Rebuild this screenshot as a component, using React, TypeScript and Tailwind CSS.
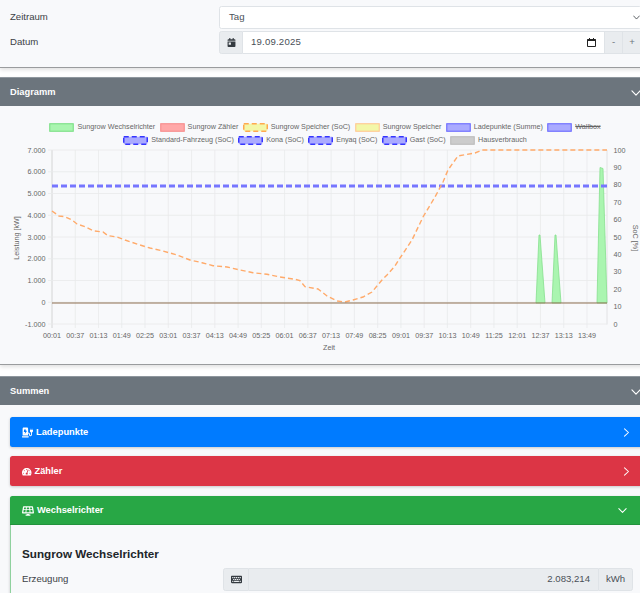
import { FaCalendarDay, FaChargingStation, FaKeyboard, FaSolarPanel, FaTachometerAlt } from "react-icons/fa";

const grid = Array.from({ length: 24 }, (_, i) => 52 + i * 23.26);
const times = Array.from({ length: 24 }, (_, i) => {
  const m = 1 + i * 36;
  return `${String(Math.floor(m / 60)).padStart(2, "0")}:${String(m % 60).padStart(2, "0")}`;
});
const leftTicks = ["7.000", "6.000", "5.000", "4.000", "3.000", "2.000", "1.000", "0", "-1.000"];
const rightTicks = [100, 90, 80, 70, 60, 50, 40, 30, 20, 10, 0];

const soc =
  "52,211 59,216 65,216.7 72,220 77,224 85,226.7 93,230.7 103,232 108,235.7 117,237 125,240 140,245 150,248 163,251 177,255 190,260 202,262.7 213,265.7 227,267 240,270 253,272.7 267,274.3 280,277 295,279.3 300,280.7 305,286.7 318,289 322,292 327,296 337,301 345,302 353,300 363,297 372,292 382,280 387,275 395,266 400,258 412,240 423,217 435,197 443,182 448,170 458,156 475,153 482,150 607,150";

const legendRows = [
  [
    { label: "Sungrow Wechselrichter", fill: "#aaf5b0", stroke: "#7adf84" },
    { label: "Sungrow Zähler", fill: "#ffa8a8", stroke: "#f78a8a" },
    { label: "Sungrow Speicher (SoC)", fill: "#f3f7a8", stroke: "#ffa94f", dashed: true },
    { label: "Sungrow Speicher", fill: "#f3f7a8", stroke: "#ffc890" },
    { label: "Ladepunkte (Summe)", fill: "#aaaaff", stroke: "#6a6aff" },
    { label: "Wallbox", fill: "#aaaaff", stroke: "#6a6aff", off: true },
  ],
  [
    { label: "Standard-Fahrzeug (SoC)", fill: "#aaaaff", stroke: "#3535ff", dashed: true },
    { label: "Kona (SoC)", fill: "#aaaaff", stroke: "#3535ff", dashed: true },
    { label: "Enyaq (SoC)", fill: "#aaaaff", stroke: "#3535ff", dashed: true },
    { label: "Gast (SoC)", fill: "#aaaaff", stroke: "#3535ff", dashed: true },
    { label: "Hausverbrauch", fill: "#cccccc", stroke: "#bbbbbb" },
  ],
];

function Chevron({ dir = "down", size = 9 }: { dir?: "down" | "right"; size?: number }) {
  return (
    <svg width={size} height={size} viewBox="0 0 16 16" fill="none" stroke="currentColor" strokeWidth="1.8" strokeLinecap="round" strokeLinejoin="round">
      <path d={dir === "down" ? "M1.5 4.5 8 11.5l6.5-7" : "M4.5 1.5 11.5 8l-7 6.5"} />
    </svg>
  );
}

function LegendBox({ fill, stroke, dashed }: { fill: string; stroke: string; dashed?: boolean }) {
  return (
    <svg width="25" height="9" viewBox="0 0 25 9" className="block">
      <rect
        x="0.75"
        y="0.75"
        width="23.5"
        height="7.5"
        fill={fill}
        stroke={stroke}
        strokeWidth={dashed ? 1.5 : 1.1}
        strokeDasharray={dashed ? "5 3" : undefined}
      />
    </svg>
  );
}

function SectionHeader({ title }: { title: string }) {
  return (
    <div className="flex h-[29px] items-center justify-between border-t border-[#8f979e] bg-[#6c757d] pl-[10px] pr-[13px] pt-[1px] text-[9.3px] font-bold text-white">
      {title}
      <Chevron size={10} />
    </div>
  );
}

function Chart() {
  return (
    <svg width="640" height="216" viewBox="0 147 640 216" className="block overflow-visible">
      {grid.map((x) => (
        <line key={x} x1={x} x2={x} y1="150" y2="328" stroke="#e9eaeb" strokeWidth="0.8" />
      ))}
      <line x1="607" x2="607" y1="150" y2="324.5" stroke="#dcdddf" strokeWidth="0.8" />
      <line x1="52" x2="52" y1="150" y2="328" stroke="#d4d5d7" strokeWidth="0.8" />
      {leftTicks.map((t, i) => (
        <g key={t}>
          <line x1="48" x2="607" y1={150 + i * 21.75} y2={150 + i * 21.75} stroke="#e9eaeb" strokeWidth="0.8" />
          <text x="45.5" y={152.6 + i * 21.75} textAnchor="end" fontSize="7.2" fill="#666">
            {t}
          </text>
        </g>
      ))}
      {rightTicks.map((t, i) => (
        <text key={t} x="613.5" y={152.6 + i * 17.4} fontSize="7.2" fill="#666">
          {t}
        </text>
      ))}
      {times.map((t, i) => (
        <text key={t} x={grid[i]} y="338" textAnchor="middle" fontSize="7.2" fill="#666">
          {t}
        </text>
      ))}
      <text x="329" y="350.4" textAnchor="middle" fontSize="7.2" fill="#666">
        Zeit
      </text>
      <text transform="translate(18.5 238) rotate(-90)" textAnchor="middle" fontSize="7.2" fill="#666">
        Leistung [kW]
      </text>
      <text transform="translate(632.5 238) rotate(90)" textAnchor="middle" fontSize="7.2" fill="#666">
        SoC [%]
      </text>
      <polygon points="536,303 539,235 540,235 545,303" fill="#aaf5b0" stroke="#86e08e" strokeWidth="0.8" />
      <polygon points="552,303 555,235 556,235 561,303" fill="#aaf5b0" stroke="#86e08e" strokeWidth="0.8" />
      <polygon points="597,303 600,167.5 603,168.5 607,303" fill="#aaf5b0" stroke="#86e08e" strokeWidth="0.8" />
      <line x1="52" x2="607" y1="186" y2="186" stroke="#7676ff" strokeWidth="3" strokeDasharray="6 3" />
      <polyline points={soc} fill="none" stroke="#ffaa6a" strokeWidth="1.4" strokeDasharray="5 3" />
      <line x1="52" x2="607" y1="303" y2="303" stroke="#8d6e50" strokeWidth="1" />
    </svg>
  );
}

export default function App() {
  return (
    <div className="h-[593px] w-[640px] overflow-hidden bg-white font-['Liberation_Sans',Arial,sans-serif] text-[9.6px] text-[#3c4146]">
      <div className="w-[654px]">
        {/* Filter */}
        <div className="h-[68px] border-b-[1.5px] border-[#9a9c9e] bg-[#f8f9fb] pr-[12px] pt-[6px] shadow-[0_2px_4px_rgba(0,0,0,0.12)]">
          <div className="flex h-[23px] items-center">
            <span className="w-[219px] pl-[10px]">Zeitraum</span>
            <div className="flex h-full flex-1 items-center justify-between rounded-[2.5px] border border-[#dfe3e7] bg-white pl-[9px] pr-[1px] text-[#495057]">
              Tag
              <span className="text-[#343a40]">
                <Chevron size={7} />
              </span>
            </div>
          </div>
          <div className="mt-[1.5px] flex h-[23px] items-center">
            <span className="w-[219px] pl-[10px]">Datum</span>
            <div className="flex h-full flex-1 text-[#495057]">
              <div className="flex w-[24px] items-center justify-center rounded-l-[2.5px] border border-[#dfe3e7] bg-[#e9ecef] text-[#343a40]">
                <FaCalendarDay size={9} />
              </div>
              <div className="flex flex-1 items-center justify-between border-y border-[#dfe3e7] bg-white pl-[8px] pr-[8px] tracking-[0.2px]">
                19.09.2025
                <svg width="9" height="9" viewBox="0 0 9 9" className="text-[#222]">
                  <path d="M.5 1.5h8v7h-8z" fill="none" stroke="currentColor" strokeWidth="1" />
                  <path d="M.5 1h8v2h-8zM2 0h1v1H2zM6 0h1v1H6z" fill="currentColor" />
                </svg>
              </div>
              <div className="flex w-[19px] items-center justify-center border border-[#dfe3e7] bg-[#e9ecef] text-[#6c757d]">-</div>
              <div className="flex w-[19px] items-center justify-center rounded-r-[2.5px] border border-l-0 border-[#dfe3e7] bg-[#e9ecef] text-[#6c757d]">+</div>
            </div>
          </div>
        </div>

        {/* Diagramm */}
        <div className="mt-[9px] shadow-[0_2px_4px_rgba(0,0,0,0.12)]">
          <SectionHeader title="Diagramm" />
          <div className="h-[259px] border-b-[1.5px] border-[#9a9c9e] bg-[#f8f9fb] pt-[15px]">
            <div className="w-[640px] pl-[10px]">
              {legendRows.map((row, i) => (
                <div key={i} className="flex h-[13px] items-center justify-center gap-[4.4px] text-[7.2px] text-[#666]">
                  {row.map((item) => (
                    <div key={item.label} className="flex items-center gap-[3px]">
                      <LegendBox fill={item.fill} stroke={item.stroke} dashed={item.dashed} />
                      <span className={item.off ? "line-through" : ""}>{item.label}</span>
                    </div>
                  ))}
                </div>
              ))}
            </div>
            <Chart />
          </div>
        </div>

        {/* Summen */}
        <div className="mt-[11px]">
          <SectionHeader title="Summen" />
          <div className="bg-[#f8f9fb] px-[10px] pt-[12px] text-[9.3px]">
            <div className="flex h-[30px] items-center justify-between rounded-[2.5px] bg-[#007bff] pl-[12px] pr-[13px] pt-[1px] font-bold text-white shadow-[0_1px_3px_rgba(0,0,0,0.2)]">
              <div className="flex items-center gap-[3px]">
                <FaChargingStation size={11} />
                Ladepunkte
              </div>
              <Chevron dir="right" />
            </div>
            <div className="mt-[9px] flex h-[30px] items-center justify-between rounded-[2.5px] bg-[#dc3545] pl-[12px] pr-[13px] pt-[1px] font-bold text-white shadow-[0_1px_3px_rgba(0,0,0,0.2)]">
              <div className="flex items-center gap-[3px]">
                <FaTachometerAlt size={9.5} />
                Zähler
              </div>
              <Chevron dir="right" />
            </div>
            <div className="mt-[10px] rounded-[2.5px] border-l border-[#8fd19e] shadow-[0_1px_3px_rgba(0,0,0,0.2)]">
              <div className="-ml-px flex h-[29px] items-center justify-between rounded-t-[2.5px] border-b border-[#23923d] bg-[#28a745] pl-[12px] pr-[17px] pt-[1px] font-bold text-white">
                <div className="flex items-center gap-[3px]">
                  <FaSolarPanel size={12} />
                  Wechselrichter
                </div>
                <Chevron />
              </div>
              <div className="px-[11px] pb-[20px] pt-[22px] text-[9.6px]">
                <h5 className="text-[11.7px] font-bold leading-[14px] text-[#212529]">Sungrow Wechselrichter</h5>
                <div className="mt-[7px] flex h-[23px] items-center">
                  <span className="w-[201px]">Erzeugung</span>
                  <div className="flex h-full flex-1 text-[#495057]">
                    <div className="flex w-[26px] items-center justify-center rounded-l-[2.5px] border border-[#dfe3e7] bg-[#e9ecef] text-[#343a40]">
                      <FaKeyboard size={11} />
                    </div>
                    <div className="flex flex-1 items-center justify-end border-y border-[#dfe3e7] bg-[#e9ecef] pr-[8px]">2.083,214</div>
                    <div className="flex w-[35px] items-center justify-center rounded-r-[2.5px] border border-[#dfe3e7] bg-[#e9ecef]">kWh</div>
                  </div>
                </div>
              </div>
            </div>
          </div>
        </div>
      </div>
    </div>
  );
}
